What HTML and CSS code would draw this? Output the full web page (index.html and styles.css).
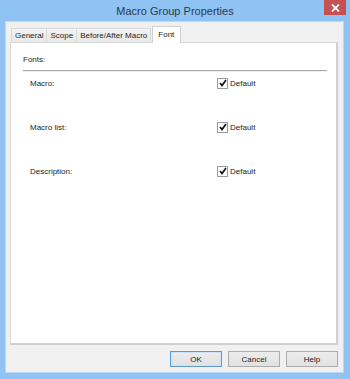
FILE: index.html
```html
<!DOCTYPE html>
<html lang="en">
<head>
  <meta charset="UTF-8">
  <meta name="viewport" content="width=device-width, initial-scale=1.0">
  <title>Macro Group Properties</title>
  <link rel="stylesheet" href="styles.css">
</head>
<body>
  <div class="window">
    <div class="titlebar">
      <span></span>
      <span class="title">Macro Group Properties</span>
      <span class="close-btn">
        <svg width="9" height="8" viewBox="0 0 9 8"><path d="M1 0.5 L8 7.5 M8 0.5 L1 7.5" stroke="#fff" stroke-width="1.8"/></svg>
      </span>
    </div>
    <div class="client">
      <div class="tabs">
        <div class="tab">General</div>
        <div class="tab">Scope</div>
        <div class="tab">Before/After Macro</div>
        <div class="tab active">Font</div>
      </div>
      <div class="panel">
        <div class="group-label">Fonts:</div>
        <div class="divider"></div>
        <div class="font-row">
          <span class="row-label">Macro:</span>
          <label class="check"><span class="box"><svg width="8" height="8" viewBox="0 0 8 8"><path d="M1 4 L3 6.5 L7 1" fill="none" stroke="#111" stroke-width="1.7"/></svg></span>Default</label>
        </div>
        <div class="font-row">
          <span class="row-label">Macro list:</span>
          <label class="check"><span class="box"><svg width="8" height="8" viewBox="0 0 8 8"><path d="M1 4 L3 6.5 L7 1" fill="none" stroke="#111" stroke-width="1.7"/></svg></span>Default</label>
        </div>
        <div class="font-row">
          <span class="row-label">Description:</span>
          <label class="check"><span class="box"><svg width="8" height="8" viewBox="0 0 8 8"><path d="M1 4 L3 6.5 L7 1" fill="none" stroke="#111" stroke-width="1.7"/></svg></span>Default</label>
        </div>
      </div>
      <div class="buttons">
        <button class="btn default">OK</button>
        <button class="btn">Cancel</button>
        <button class="btn">Help</button>
      </div>
    </div>
  </div>
</body>
</html>
```
FILE: styles.css
```css
body {
  margin: 0;
  font-family: "Liberation Sans", Arial, sans-serif;
  font-size: 8px;
  color: #1e1e1e;
}
.window {
  width: 350px;
  height: 379px;
  background-color: #8ec3f3;
  display: flex;
  flex-direction: column;
  box-sizing: border-box;
}
.titlebar {
  height: 22px;
  display: grid;
  grid-template-columns: 1fr auto 1fr;
  align-items: start;
}
.title {
  font-size: 11px;
  color: #2b3a4f;
  line-height: 22px;
}
.close-btn {
  justify-self: end;
  margin-right: 4px;
  width: 22px;
  height: 15px;
  background-color: #c75050;
  display: flex;
  align-items: center;
  justify-content: center;
}
.client {
  flex: 1;
  margin: 0 7px 7px 6px;
  background-color: #f0f0f0;
  display: flex;
  flex-direction: column;
  padding: 6px 5px 5px 4px;
  box-shadow: 0 0 0 1px #b9daf7;
}
.tabs {
  display: flex;
  height: 14px;
  padding-left: 1px;
  position: relative;
  z-index: 1;
}
.tab {
  height: 14px;
  box-sizing: border-box;
  padding: 0 3px;
  line-height: 13px;
  border: 1px solid #d9d9d9;
  border-bottom: none;
  border-left: none;
  background: linear-gradient(#f3f3f3, #e8e8e8);
}
.tab:first-child {
  border-left: 1px solid #d9d9d9;
}
.tab.active {
  height: 17px;
  margin-top: -2px;
  margin-left: 1px;
  padding: 0 6px 0 5px;
  line-height: 15px;
  background: #fff;
  border: 1px solid #d0d0d0;
  border-bottom: none;
}
.panel {
  flex: 1;
  background-color: #fff;
  border: 1px solid #d9d9d9;
  border-right: 2px solid #cfcfcf;
  border-bottom: 2px solid #cfcfcf;
  padding: 12px 9px 0 12px;
}
.group-label {
  line-height: 10px;
}
.divider {
  margin-top: 5px;
  border-top: 1px solid #a9a9a9;
  border-bottom: 1px solid #efefef;
}
.font-row {
  display: flex;
  align-items: center;
  padding-left: 7px;
  height: 12px;
  margin-top: 5px;
  margin-bottom: 32px;
}
.row-label {
  width: 187px;
}
.check {
  display: flex;
  align-items: center;
}
.box {
  width: 9px;
  height: 9px;
  border: 1px solid #9a9a9a;
  background: #fff;
  display: flex;
  align-items: center;
  justify-content: center;
  margin-right: 2px;
}
.buttons {
  display: flex;
  justify-content: flex-end;
  gap: 6px;
  margin-top: 6px;
}
.btn {
  width: 52px;
  height: 16px;
  padding: 0;
  font-family: "Liberation Sans", Arial, sans-serif;
  font-size: 8px;
  color: #1e1e1e;
  background: linear-gradient(#ececec, #e1e1e1);
  border: 1px solid #adadad;
  border-radius: 0;
}
.btn.default {
  border-color: #5b9bd5;
  box-shadow: inset 0 0 0 1px #cfe3f5;
}
```
